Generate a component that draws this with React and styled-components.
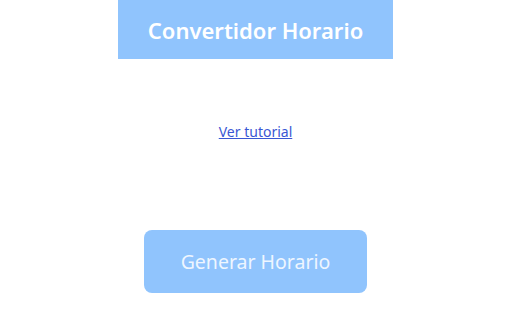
import React from "react";
import styled, { createGlobalStyle } from "styled-components";

const GlobalStyle = createGlobalStyle`
  html, body {
    margin: 0;
    padding: 0;
    background: #ffffff;
    font-family: "Noto Sans", "Open Sans", sans-serif;
  }
`;

const Page = styled.div`
  display: flex;
  flex-direction: column;
  align-items: center;
  width: 511px;
  height: 320px;
`;

const Header = styled.header`
  display: flex;
  align-items: center;
  justify-content: center;
  width: 275px;
  height: 59px;
  background-color: #90c4fd;
`;

const Title = styled.h1`
  margin: 0;
  color: #ffffff;
  font-size: 22px;
  font-weight: 600;
`;

const TutorialLink = styled.a`
  margin-top: 63px;
  color: #3a57d4;
  font-size: 14px;
  text-decoration: underline;
  cursor: pointer;
`;

const GenerateButton = styled.button`
  margin-top: 89px;
  width: 223px;
  height: 63px;
  border: none;
  border-radius: 8px;
  background-color: #90c4fd;
  color: #eef6ff;
  font-family: inherit;
  font-size: 19.5px;
  cursor: pointer;
`;

function App() {
  return (
    <>
      <GlobalStyle />
      <Page>
        <Header>
          <Title>Convertidor Horario</Title>
        </Header>
        <TutorialLink href="#">Ver tutorial</TutorialLink>
        <GenerateButton disabled>Generar Horario</GenerateButton>
      </Page>
    </>
  );
}

export default App;
